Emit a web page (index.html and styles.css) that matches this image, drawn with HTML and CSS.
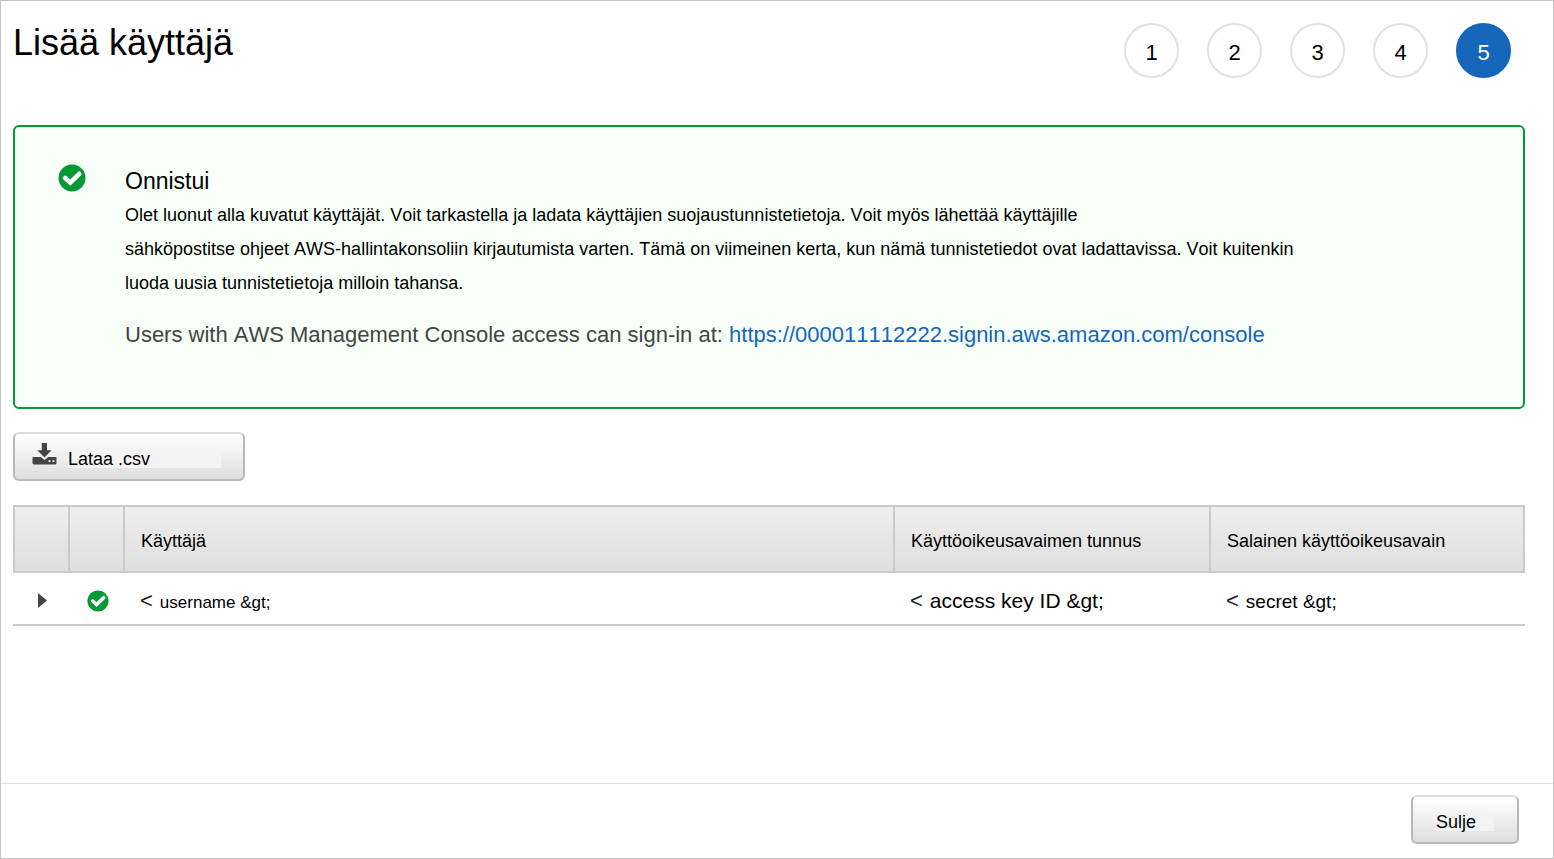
FILE: index.html
```html
<!DOCTYPE html>
<html lang="fi">
<head>
<meta charset="utf-8">
<title>Lisää käyttäjä</title>
<link rel="stylesheet" href="styles.css">
</head>
<body>
<svg class="sprite" aria-hidden="true">
  <symbol id="check" viewBox="0 0 28 28">
    <circle cx="14" cy="14" r="13.5" fill="#049933"/>
    <path d="M7.2 14 12.3 18.6 21.2 9.8" fill="none" stroke="#fff" stroke-width="4.600" stroke-linecap="round"/>
  </symbol>
</svg>
<div class="wizard">
  <header class="wizard-header">
    <h1 class="title">Lisää käyttäjä</h1>
    <ol class="steps">
      <li class="step">1</li>
      <li class="step">2</li>
      <li class="step">3</li>
      <li class="step">4</li>
      <li class="step step-current" aria-current="step">5</li>
    </ol>
  </header>

  <main class="content">
    <section class="alert">
      <svg class="alert-icon" aria-hidden="true"><use href="#check"/></svg>
      <div class="alert-body">
        <h2 class="alert-title">Onnistui</h2>
        <p class="alert-text">Olet luonut alla kuvatut käyttäjät. Voit tarkastella ja ladata käyttäjien suojaustunnistetietoja. Voit myös lähettää käyttäjille<br>
        sähköpostitse ohjeet AWS-hallintakonsoliin kirjautumista varten. Tämä on viimeinen kerta, kun nämä tunnistetiedot ovat ladattavissa. Voit kuitenkin<br>
        luoda uusia tunnistetietoja milloin tahansa.</p>
        <p class="alert-signin">Users with AWS Management Console access can sign-in at: <a class="link" href="#">https://000011112222.signin.aws.amazon.com/console</a></p>
      </div>
    </section>

    <button class="button button-download" type="button">
      <svg class="download-icon" viewBox="0 0 24 22" aria-hidden="true">
        <path d="M9.3 0h5.2v7.2h4.6L12 14.6 4.8 7.2h4.5z"/>
        <path fill-rule="evenodd" d="M1 14h7.2l3.8 3 3.8-3H23q1 0 1 1v5q0 1.500-1.500 1.500h-21Q0 21.500 0 20v-5q0-1 1-1zM16 17.300v1.800h2v-1.800zM20 17.300v1.800h2v-1.800z"/>
      </svg>
      <span class="button-label">Lataa .csv</span>
    </button>

    <table class="users">
      <colgroup>
        <col class="col-icon"><col class="col-icon"><col><col class="col-key"><col class="col-key">
      </colgroup>
      <thead>
        <tr>
          <th></th>
          <th></th>
          <th scope="col">Käyttäjä</th>
          <th scope="col">Käyttöoikeusavaimen tunnus</th>
          <th scope="col">Salainen käyttöoikeusavain</th>
        </tr>
      </thead>
      <tbody>
        <tr>
          <td class="cell-icon"><button class="expander" type="button" aria-label="Laajenna"><svg class="expander-icon" viewBox="0 0 9 15" aria-hidden="true"><path d="M0 0 9 7.500 0 15z"/></svg></button></td>
          <td class="cell-icon"><svg class="row-icon" aria-hidden="true"><use href="#check"/></svg></td>
          <td><div class="value"><span class="bracket">&lt;</span><span class="username">username &amp;gt;</span></div></td>
          <td><div class="value"><span class="bracket">&lt;</span><span class="key-id">access key ID &amp;gt;</span></div></td>
          <td><div class="value"><span class="bracket">&lt;</span><span class="secret">secret &amp;gt;</span></div></td>
        </tr>
      </tbody>
    </table>
  </main>

  <footer class="wizard-footer">
    <button class="button button-close" type="button"><span class="button-label">Sulje</span></button>
  </footer>
</div>
</body>
</html>
```

FILE: styles.css
```css
* {
  box-sizing: border-box;
}

body {
  margin: 0;
  font-family: "Liberation Sans", Arial, sans-serif;
  font-size: 18px;
  font-kerning: none;
  color: #000;
  background: #fff;
}

.sprite {
  display: none;
}

.wizard {
  display: flex;
  flex-direction: column;
  min-height: 100vh;
  border: 1px solid #c3c3c3;
}

.wizard-header {
  display: flex;
  justify-content: space-between;
  align-items: flex-start;
  padding: 22px 42px 0 12px;
}

.title {
  margin: 0;
  font-size: 36px;
  line-height: 40px;
  font-weight: 400;
}

.steps {
  display: flex;
  gap: 28px;
  margin: 0;
  padding: 0;
  list-style: none;
}

.step {
  width: 55px;
  height: 55px;
  padding-top: 2px;
  border: 2px solid #e1e1e1;
  border-radius: 50%;
  font-size: 22px;
  line-height: 51px;
  text-align: center;
}

.step-current {
  border-color: #1666bb;
  background: #1666bb;
  color: #fff;
}

.content {
  flex: 1;
  padding: 47px 28px 24px 12px;
}

.alert {
  display: flex;
  gap: 39px;
  padding: 37px 43px 55px;
  border: 2px solid #049933;
  border-radius: 6px;
  background: #f7fff8;
}

.alert-icon {
  flex: none;
  width: 28px;
  height: 28px;
}

.alert-title {
  margin: 0;
  font-size: 23px;
  line-height: 34px;
  font-weight: 400;
}

.alert-text {
  margin: 0;
  line-height: 34px;
}

.alert-signin {
  margin: 18px 0 0;
  font-size: 22px;
  line-height: 34px;
  color: #444;
}

.link {
  color: #1666bb;
  text-decoration: none;
}

.button {
  display: flex;
  align-items: center;
  height: 49px;
  border: 2px solid #b8b8b8;
  border-top-color: #dcdcdc;
  border-radius: 6px;
  background: linear-gradient(#fff, #dedede);
  font: inherit;
  font-kerning: none;
  color: #000;
  text-align: left;
}

.button-label {
  flex: 1;
  margin-top: 4px;
  line-height: 18px;
  background: #f3f3f3;
}

.button-download {
  gap: 11px;
  width: 232px;
  margin: 23px 0 24px;
  padding: 0 22px 0 17px;
}

.download-icon {
  width: 25px;
  height: 22px;
  margin-bottom: 6px;
  fill: #444;
}

.users {
  width: 100%;
  border-collapse: separate;
  border-spacing: 0;
  table-layout: fixed;
}

.col-icon {
  width: 55px;
}

.col-key {
  width: 316px;
}

.users th {
  height: 68px;
  padding: 4px 0 0 16px;
  border: 2px solid #cacaca;
  border-right-width: 0;
  background: linear-gradient(#eee, #dfdfdf);
  font-weight: 400;
  text-align: left;
}

.users th:last-child {
  border-right-width: 2px;
}

.users td {
  height: 53px;
  padding: 4px 0 0 17px;
  border-bottom: 2px solid #cacaca;
}

.users .cell-icon {
  padding: 4px 0 0 4px;
  line-height: 0;
  text-align: center;
}

.expander {
  padding: 0;
  border: 0;
  background: none;
}

.expander-icon {
  display: block;
  width: 9px;
  height: 15px;
  fill: #444;
}

.row-icon {
  width: 22px;
  height: 22px;
}

.value {
  display: flex;
  align-items: baseline;
  gap: 7px;
}

.bracket {
  font-size: 22px;
  color: #222;
}

.username {
  font-size: 17px;
}

.key-id {
  font-size: 21px;
}

.secret {
  font-size: 19px;
}

.wizard-footer {
  display: flex;
  justify-content: flex-end;
  padding: 11px 34px 14px;
  border-top: 1px solid #e1e1e1;
}

.button-close {
  width: 108px;
  padding: 0 23px;
}
```
